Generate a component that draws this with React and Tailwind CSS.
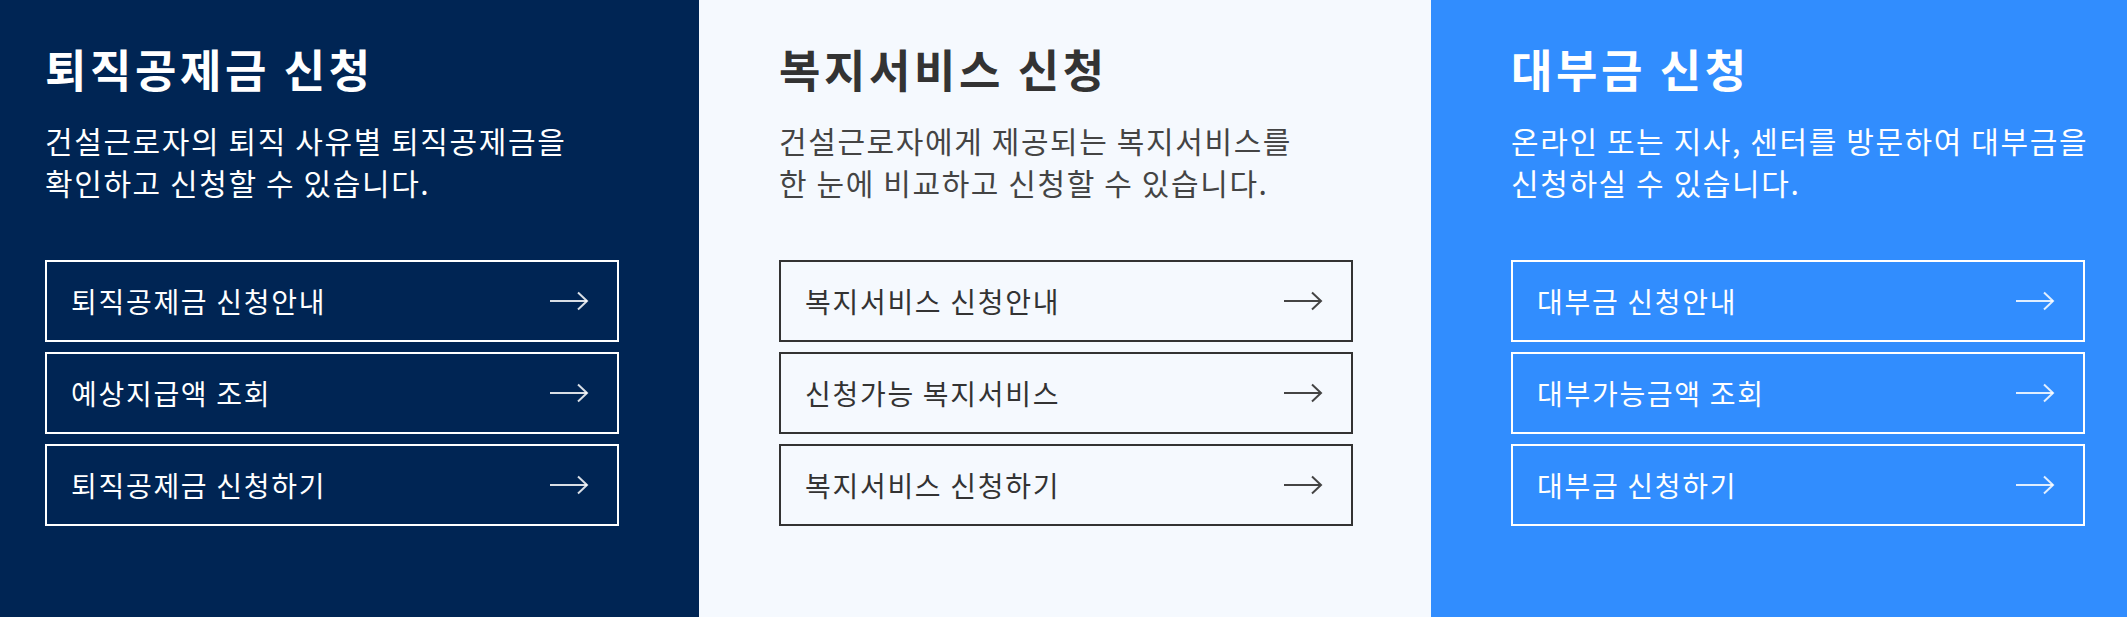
import React from "react";

const FONT = { fontFamily: '"Noto Sans CJK KR", "Noto Sans", sans-serif' };

function Arrow({ className }) {
  return (
    <svg width="40" height="20" viewBox="0 0 40 20" fill="none" className={className}>
      <path d="M1 10H38" stroke="currentColor" strokeWidth="2" />
      <path d="M29 1.5L38 10L29 18.5" stroke="currentColor" strokeWidth="2" strokeLinejoin="miter" />
    </svg>
  );
}

function LinkBox({ label, tone }) {
  const box =
    tone === "light"
      ? "border-[#333333] text-[#333333]"
      : "border-white text-white";
  const arrow = tone === "light" ? "text-[#444444]" : "text-white/85";
  return (
    <a
      href="#"
      className={`flex h-[82px] w-[574px] items-center justify-between border-2 pl-[24px] pr-[28px] text-[28px] leading-none tracking-[1.7px] ${box}`}
    >
      <span>{label}</span>
      <Arrow className={arrow} />
    </a>
  );
}

function Panel({ className, title, lines, links, tone, titleColor, descColor }) {
  return (
    <section className={`h-[617px] pt-[43px] ${className}`}>
      <h2 className={`text-[45px] font-bold leading-[52px] tracking-[3.6px] ${titleColor}`}>{title}</h2>
      <p className={`mt-[24px] text-[30px] leading-[42px] tracking-[1.6px] ${descColor}`}>
        {lines.map((l, i) => (
          <React.Fragment key={i}>
            {l}
            {i < lines.length - 1 && <br />}
          </React.Fragment>
        ))}
      </p>
      <div className="mt-[57px] flex flex-col gap-[10px]">
        {links.map((l) => (
          <LinkBox key={l} label={l} tone={tone} />
        ))}
      </div>
    </section>
  );
}

export default function App() {
  return (
    <div className="flex w-[2127px] overflow-hidden" style={FONT}>
      <Panel
        className="w-[699px] shrink-0 bg-[#002554] pl-[45px]"
        title="퇴직공제금 신청"
        lines={["건설근로자의 퇴직 사유별 퇴직공제금을", "확인하고 신청할 수 있습니다."]}
        links={["퇴직공제금 신청안내", "예상지급액 조회", "퇴직공제금 신청하기"]}
        tone="dark"
        titleColor="text-white"
        descColor="text-white"
      />
      <Panel
        className="w-[732px] shrink-0 bg-[#f5f9fe] pl-[80px]"
        title="복지서비스 신청"
        lines={["건설근로자에게 제공되는 복지서비스를", "한 눈에 비교하고 신청할 수 있습니다."]}
        links={["복지서비스 신청안내", "신청가능 복지서비스", "복지서비스 신청하기"]}
        tone="light"
        titleColor="text-[#333333]"
        descColor="text-[#444444]"
      />
      <Panel
        className="flex-1 bg-[#318dfe] pl-[80px]"
        title="대부금 신청"
        lines={["온라인 또는 지사, 센터를 방문하여 대부금을", "신청하실 수 있습니다."]}
        links={["대부금 신청안내", "대부가능금액 조회", "대부금 신청하기"]}
        tone="dark"
        titleColor="text-white"
        descColor="text-white"
      />
    </div>
  );
}
